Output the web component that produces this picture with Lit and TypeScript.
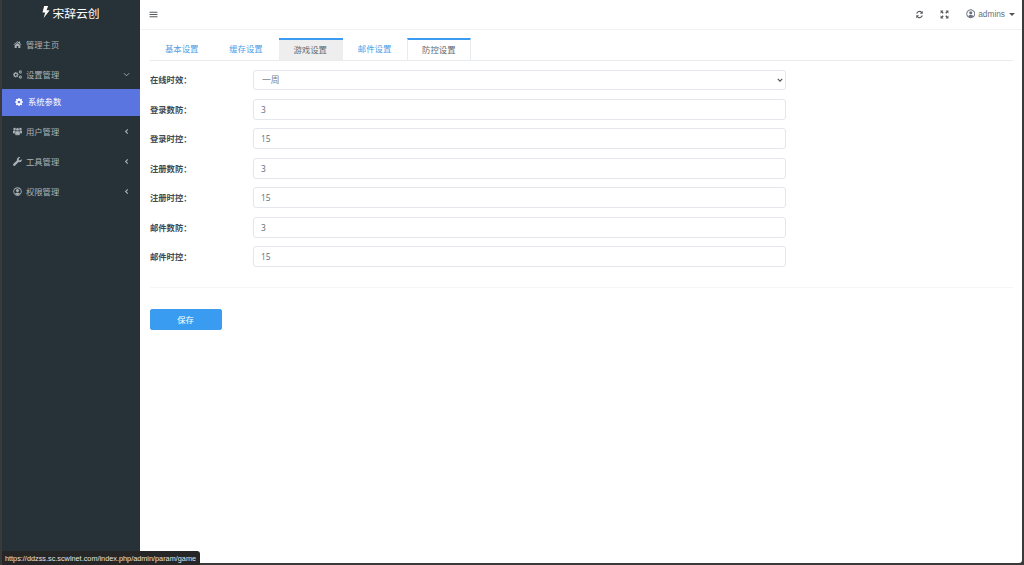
import { LitElement, html, css, svg } from "lit";
import { customElement } from "lit/decorators.js";

const cogPath = "M6.800 0h2.400l.4 2.200 1.300.5L12.700 1.500l1.700 1.700-1.200 1.800.6 1.400 2.200.4v2.400l-2.200.4-.6 1.400 1.200 1.800-1.700 1.700-1.800-1.200-1.300.5L9.200 16H6.800l-.4-2.200-1.300-.5-1.800 1.200-1.700-1.700 1.200-1.800-.6-1.400L0 9.200V6.800l2.200-.4.6-1.400L1.600 3.200 3.300 1.500l1.800 1.200 1.300-.5zM8 5.300a2.700 2.700 0 1 0 .01 0z";

const icons: Record<string, any> = {
  bolt: svg`<path d="M9.500 0H4.200L2 8.500h3.600L3.600 16 11.500 5.600H7.400z"/>`,
  home: svg`<path d="M8 2 1 8l.8 1L8 3.800 14.200 9l.8-1-2.500-2.100V2.500h-2v1.700zM3 9.500V14h3.600v-3.200h2.800V14H13V9.500L8 5.300z"/>`,
  cogs: svg`<g fill-rule="evenodd"><path transform="translate(0 3.500) scale(.62)" d="${cogPath}"/><path transform="translate(10 .5) scale(.38)" d="${cogPath}"/><path transform="translate(10 9.500) scale(.38)" d="${cogPath}"/></g>`,
  cog: svg`<path fill-rule="evenodd" d="${cogPath}"/>`,
  users: svg`<circle cx="2.900" cy="3.600" r="2.300"/><circle cx="13.100" cy="3.600" r="2.300"/><path d="M0 7.500c0-.8.500-1.300 1.200-1.300h3.300v5.300H1.200C.5 11.500 0 11 0 10.300zM16 7.500c0-.8-.5-1.300-1.200-1.300h-3.300v5.300h3.300c.7 0 1.200-.5 1.200-1.200z"/><circle cx="8" cy="4.300" r="3" stroke="#263238" stroke-width=".7"/><path d="M3.500 10c0-1.600.9-2.700 2.100-2.700h4.800c1.200 0 2.100 1.100 2.100 2.700v3c0 1-.7 1.700-1.700 1.700H5.200c-1 0-1.700-.7-1.700-1.700z" stroke="#263238" stroke-width=".7"/>`,
  wrench: svg`<path d="M15.800 4.200c.3 2.500-1.800 5-4.500 5-.5 0-1-.1-1.400-.2L3.800 15.100a1.800 1.800 0 0 1-2.900-.1 1.800 1.800 0 0 1 0-2.800L7 6.100c-.6-2.800 1.400-5.700 4.500-5.900.6 0 1.200.1 1.600.3L10.200 3.300v2.500h2.500z"/>`,
  usero: svg`<path fill-rule="evenodd" d="M8 .5a7.500 7.500 0 1 0 .01 0zM8 2.100a5.900 5.900 0 1 1-.01 0z"/><circle cx="8" cy="6.400" r="2.700"/><path d="M3.600 12.200C4.300 10.700 6 10 8 10s3.700.7 4.400 2.200A5.900 5.900 0 0 1 8 14a5.900 5.900 0 0 1-4.400-1.800z"/>`,
  bars: svg`<path d="M1 3h14v1.800H1zM1 7.100h14v1.800H1zM1 11.200h14V13H1z"/>`,
  refresh: svg`<path d="M13.800 1.500v5h-5l1.900-1.900A4 4 0 0 0 4.300 6.300H2A6.300 6.300 0 0 1 12.300 3zM2.200 14.500v-5h5l-1.900 1.900a4 4 0 0 0 6.400-1.700H14A6.300 6.300 0 0 1 3.700 13z"/>`,
  expand: svg`<path d="M1 1h5.200L4.500 2.700l2.100 2.100-1.800 1.800-2.100-2.100L1 6.200zM15 1v5.200l-1.700-1.700-2.100 2.100-1.800-1.800 2.100-2.100L9.800 1zM1 15V9.800l1.700 1.700 2.100-2.100 1.800 1.800-2.100 2.100L6.200 15zM15 15H9.800l1.700-1.700-2.100-2.100 1.800-1.800 2.100 2.100L15 9.800z"/>`,
};
const ic = (n: string, cls = "") => html`<svg class="ic ${cls}" viewBox="0 0 16 16" fill="currentColor" aria-hidden="true">${icons[n]}</svg>`;

const down = html`<svg class="chev" viewBox="0 0 8 8" aria-hidden="true"><path d="M1 2.500 4 5.500 7 2.500" fill="none" stroke="currentColor" stroke-width="1"/></svg>`;
const left = html`<svg class="chev" viewBox="0 0 8 8" aria-hidden="true"><path d="M5.500 1.500 3 4 5.500 6.500" fill="none" stroke="currentColor" stroke-width="1.300"/></svg>`;

const rows = [
  ["登录数防", "3"],
  ["登录时控", "15"],
  ["注册数防", "3"],
  ["注册时控", "15"],
  ["邮件数防", "3"],
  ["邮件时控", "15"],
];

@customElement("app-root")
export class AppRoot extends LitElement {
  static styles = css`
    :host {
      display: block;
      position: relative;
      width: 1024px;
      height: 565px;
      overflow: hidden;
      background: #3a3a3a;
      font-family: "Noto Sans CJK SC", "Liberation Sans", sans-serif;
      color: #54667a;
    }
    .frame {
      display: flex;
      height: 563px;
      margin: 0 2px 0 2px;
      background: #fff;
      border-radius: 0 0 3px 0;
      overflow: hidden;
    }
    .side {
      width: 138px;
      flex: none;
      background: #263238;
      color: #aab2b6;
      font-size: 8.300px;
    }
    .logo {
      height: 24px;
      display: flex;
      align-items: center;
      justify-content: center;
      color: #fff;
      font-size: 11.800px;
      padding-bottom: 2px;
    }
    .logo .ic { width: 12px; height: 12px; margin: 0 -1px; }
    .item {
      height: 30px;
      display: flex;
      align-items: center;
      padding: 0 10px 0 11px;
      gap: 4px;
    }
    .first { margin-top: 3px; }
    .item .ic { width: 9px; height: 9px; flex: none; }
    .item .label { flex: 1; }
    .chev { width: 7px; height: 7px; flex: none; }
    .sub {
      height: 27px;
      background: #5a74e0;
      color: #fff;
      display: flex;
      align-items: center;
      gap: 5px;
      padding-left: 13px;
    }
    .sub span { padding-bottom: 3px; }
    .sub .ic { width: 8px; height: 8px; margin-bottom: 1px; }
    .main { flex: 1; min-width: 0; display: flex; flex-direction: column; }
    .top {
      height: 30px;
      flex: none;
      box-sizing: border-box;
      border-bottom: 1px solid #f0f2f4;
      display: flex;
      align-items: center;
      padding: 0 7px 1px 9px;
      color: #55595f;
    }
    .top .ic { width: 9px; height: 9px; }
    .spacer { flex: 1; }
    .tool { margin-right: 16px; display: flex; }
    .tool:nth-of-type(3) { margin-right: 17px; }
    .user {
      display: flex;
      align-items: center;
      gap: 3px;
      font-family: "Liberation Sans", sans-serif;
      font-size: 8.300px;
      color: #6b7280;
    }
    .user .ic { width: 9.500px; height: 9.500px; }
    .caret {
      width: 0;
      height: 0;
      margin-left: 1px;
      border: 3px solid transparent;
      border-top-color: #555;
      border-bottom: 0;
    }
    .content { padding: 8px 9px 0 10px; }
    .tabs {
      display: flex;
      height: 22px;
      border-bottom: 1px solid #e9ecef;
      font-size: 8.400px;
    }
    .tab {
      width: 64.300px;
      box-sizing: border-box;
      display: flex;
      align-items: center;
      justify-content: center;
      color: #4f9ee6;
      padding: 0 1px 2px 0;
    }
    .tab.active {
      background: #eeeeee;
      border-top: 2px solid #3a9cf0;
      color: #5f6b74;
    }
    .tab.outlined {
      background: #fff;
      border-top: 2px solid #3a9cf0;
      border-left: 1px solid #e9ecef;
      border-right: 1px solid #e9ecef;
      color: #5f6b74;
    }
    .form { width: 636px; padding-top: 8.500px; display: grid; row-gap: 8.700px; }
    .row { display: flex; align-items: center; height: 20.800px; }
    .row label {
      width: 103px;
      flex: none;
      font-size: 8.300px;
      font-weight: 700;
      color: #3e4a52;
      padding-bottom: 1px;
    }
    .field {
      flex: 1;
      height: 20.800px;
      box-sizing: border-box;
      border: 1px solid #e3e6ea;
      border-radius: 3px;
      background: #fff;
      display: flex;
      align-items: center;
      padding: 0 7px;
      font-family: "Open Sans", "Noto Sans CJK SC", sans-serif;
      font-size: 8.400px;
      color: #5f6b74;
    }
    .field .val { flex: 1; }
    .field .opt { flex: 1; padding-left: 1px; font-size: 8.800px; color: #7a848c; }
    .arrow { width: 6px; height: 6px; color: #555; margin-right: -5px; }
    .rule { border: 0; border-top: 1px solid #f4f5f6; margin: 20px 0 21px; }
    .btn {
      display: block;
      width: 72px;
      height: 20.800px;
      padding: 0 1px 2px 0;
      border: 1px solid #3f9df0;
      border-radius: 2px;
      background: #3a9cf0;
      color: #fff;
      font: 8.400px "Noto Sans CJK SC", sans-serif;
    }
    .status {
      position: absolute;
      left: 2px;
      bottom: 0;
      height: 14px;
      padding: 0 4px 0 3px;
      display: flex;
      align-items: center;
      background: #262626;
      border-radius: 0 3px 0 0;
      color: #e4e4e4;
      font: 7.300px "Liberation Sans", sans-serif;
    }
  `;

  render() {
    return html`
      <div class="frame">
        <aside class="side">
          <div class="logo">${ic("bolt")}<span>宋辞云创</span></div>
          <div class="item first">${ic("home")}<span class="label">管理主页</span></div>
          <div class="item">${ic("cogs")}<span class="label">设置管理</span>${down}</div>
          <div class="sub">${ic("cog")}<span>系统参数</span></div>
          <div class="item">${ic("users")}<span class="label">用户管理</span>${left}</div>
          <div class="item">${ic("wrench")}<span class="label">工具管理</span>${left}</div>
          <div class="item">${ic("usero")}<span class="label">权限管理</span>${left}</div>
        </aside>
        <main class="main">
          <header class="top">
            ${ic("bars")}
            <span class="spacer"></span>
            <span class="tool">${ic("refresh")}</span>
            <span class="tool">${ic("expand")}</span>
            <span class="user">${ic("usero")}<span>admins</span><i class="caret"></i></span>
          </header>
          <section class="content">
            <nav class="tabs">
              <div class="tab">基本设置</div>
              <div class="tab">缓存设置</div>
              <div class="tab active">游戏设置</div>
              <div class="tab">邮件设置</div>
              <div class="tab outlined">防控设置</div>
            </nav>
            <div class="form">
              <div class="row">
                <label>在线时效：</label>
                <div class="field"><span class="opt">一周</span><svg class="arrow" viewBox="0 0 8 8" aria-hidden="true"><path d="M1 2.500 4 5.500 7 2.500" fill="none" stroke="currentColor" stroke-width="1.500"/></svg></div>
              </div>
              ${rows.map(([l, v]) => html`<div class="row"><label>${l}：</label><div class="field"><span class="val">${v}</span></div></div>`)}
            </div>
            <hr class="rule" />
            <button class="btn">保存</button>
          </section>
        </main>
      </div>
      <div class="status">https://ddzss.sc.scwlnet.com/index.php/admin/param/game</div>
    `;
  }
}
